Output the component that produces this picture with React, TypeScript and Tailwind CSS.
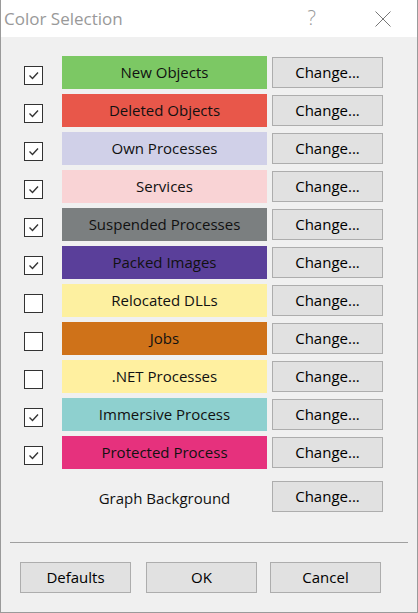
const rows = [
  { label: "New Objects", color: "bg-[#7cc864]", checked: true },
  { label: "Deleted Objects", color: "bg-[#e8574a]", checked: true },
  { label: "Own Processes", color: "bg-[#d0d0e8]", checked: true },
  { label: "Services", color: "bg-[#f9d3d5]", checked: true },
  { label: "Suspended Processes", color: "bg-[#7b7f80]", checked: true },
  { label: "Packed Images", color: "bg-[#5a3f9a]", checked: true },
  { label: "Relocated DLLs", color: "bg-[#fdf0a0]", checked: false },
  { label: "Jobs", color: "bg-[#cf7219]", checked: false },
  { label: ".NET Processes", color: "bg-[#fff0a0]", checked: false },
  { label: "Immersive Process", color: "bg-[#8ed0cf]", checked: true },
  { label: "Protected Process", color: "bg-[#e6317d]", checked: true },
];

function Checkbox({ checked }: { checked: boolean }) {
  return (
    <div className="mt-[10px] ml-[23px] size-[19px] shrink-0 border border-[#333] bg-white">
      {checked && (
        <svg viewBox="0 0 17 17" className="size-[17px]">
          <polyline
            points="4.5,8.5 7.5,11.5 13,5.5"
            fill="none"
            stroke="#333"
            strokeWidth="1.4"
          />
        </svg>
      )}
    </div>
  );
}

function Button({ children, className = "" }: { children: string; className?: string }) {
  return (
    <button
      className={`flex items-center justify-center border border-[#adadad] bg-[#e1e1e1] text-[15px] text-black ${className}`}
    >
      {children}
    </button>
  );
}

export default function App() {
  return (
    <div
      className="flex h-[613px] w-[418px] flex-col border-x border-b border-[#9a9a9a] bg-[#f0f0f0]"
      style={{ fontFamily: '"Segoe UI", "Open Sans", sans-serif' }}
    >
      <div className="flex h-[37px] shrink-0 items-center bg-white">
        <span className="ml-[3px] mt-[1px] text-[17px] text-[#999]">Color Selection</span>
        <span className="ml-auto mt-[-1px] text-[20px] font-light text-[#999]">?</span>
        <svg viewBox="0 0 16 16" className="ml-[59px] mr-[26px] size-[16px]">
          <path d="M0.5 0.5 L15.5 15.5 M15.5 0.5 L0.5 15.5" stroke="#777" strokeWidth="1" />
        </svg>
      </div>

      <div className="mt-[19px] flex flex-col gap-[5px]">
        {rows.map((r) => (
          <div key={r.label} className="flex h-[33px] items-start">
            <Checkbox checked={r.checked} />
            <div
              className={`ml-[19px] flex h-[33px] w-[205px] items-center justify-center text-[15px] text-[#111] ${r.color}`}
            >
              {r.label}
            </div>
            <Button className="ml-[5px] mt-[1px] h-[31px] w-[111px]">Change...</Button>
          </div>
        ))}
      </div>

      <div className="mt-[12px] flex h-[31px] items-center">
        <div className="ml-[61px] mt-[3px] flex w-[205px] justify-center text-[15px] text-[#111]">
          Graph Background
        </div>
        <Button className="ml-[5px] h-[31px] w-[111px]">Change...</Button>
      </div>

      <div className="mx-[9px] mt-[30px] h-px bg-[#a0a0a0]" />

      <div className="mt-[19px] flex">
        <Button className="ml-[19px] h-[31px] w-[111px]">Defaults</Button>
        <Button className="ml-[15px] h-[31px] w-[111px]">OK</Button>
        <Button className="ml-[13px] h-[31px] w-[111px]">Cancel</Button>
      </div>
    </div>
  );
}
